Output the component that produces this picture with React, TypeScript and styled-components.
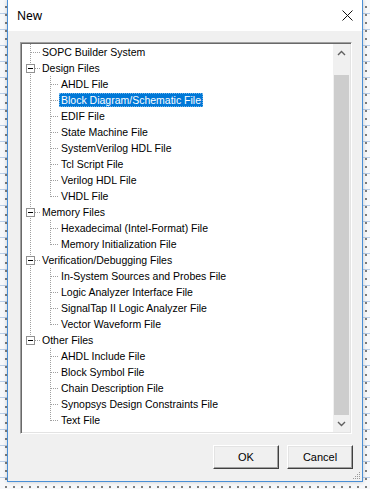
import React from "react";
import styled, { createGlobalStyle } from "styled-components";

const GlobalStyle = createGlobalStyle`
  html, body {
    margin: 0;
    padding: 0;
  }
  body {
    font-family: "Liberation Sans", Arial, sans-serif;
    background: #f7f8fa;
  }
`;

const LINE = "#a0a0a0";

const Page = styled.div`
  box-sizing: border-box;
  width: 370px;
  height: 489px;
  padding: 0 7px 7px 7px;
  background-color: #f7f8fa;
  background-image:
    radial-gradient(circle, #3a3a3a 0.6px, transparent 0.9px),
    repeating-linear-gradient(180deg, transparent 0 13px, #b9cde6 13px 14px, transparent 14px 16px);
  background-size: 8px 8px, 100% 16px;
  background-position: 2px 3px, 0 0;
`;

const Window = styled.div`
  position: relative;
  box-sizing: border-box;
  height: 482px;
  display: flex;
  flex-direction: column;
  background: #f0f0f0;
  border: 1px solid #4a8fd6;
  border-top: none;
  box-shadow: 0 0 4px rgba(0, 0, 0, 0.2);
`;

const TitleBar = styled.div`
  height: 31px;
  flex: none;
  display: flex;
  align-items: center;
  justify-content: space-between;
  padding: 0 9px 0 9px;
  background: #ffffff;
`;

const Title = styled.span`
  font-family: "Noto Sans", "Open Sans", sans-serif;
  font-size: 12px;
  color: #000;
  line-height: 16px;
`;

const CloseIcon = () => (
  <svg width="11" height="11" viewBox="0 0 11 11">
    <path d="M0.5 0.5 L10.5 10.5 M10.5 0.5 L0.5 10.5" stroke="#111" strokeWidth="1" />
  </svg>
);

const Body = styled.div`
  flex: 1;
  display: flex;
  flex-direction: column;
  padding: 11px 10px 12px 12px;
`;

const TreeBox = styled.div`
  box-sizing: border-box;
  height: 392px;
  flex: none;
  display: flex;
  padding: 1px;
  background: #fff;
  border: 1px solid;
  border-color: #a0a0a0 #ffffff #ffffff #a0a0a0;
  box-shadow: inset 1px 1px 0 #696969, inset -1px -1px 0 #e3e3e3;
`;

const TreeList = styled.div`
  flex: 1;
  overflow: hidden;
  background: #fff;
`;

const Row = styled.div`
  height: 16px;
  display: flex;
  align-items: center;
`;

const Label = styled.span<{ $selected?: boolean }>`
  height: 14px;
  line-height: 14px;
  padding: 0 2px;
  font-size: 10.5px;
  white-space: nowrap;
  color: ${(p) => (p.$selected ? "#fff" : "#000")};
  background: ${(p) => (p.$selected ? "#0078d7" : "transparent")};
  outline: ${(p) => (p.$selected ? "1px dotted rgba(255,255,255,0.45)" : "none")};
  outline-offset: -1px;
`;

const ScrollBar = styled.div`
  width: 17px;
  flex: none;
  display: flex;
  flex-direction: column;
  background: #f0f0f0;
`;

const ArrowButton = styled.div`
  height: 17px;
  flex: none;
  display: flex;
  align-items: center;
  justify-content: center;
`;

const Track = styled.div`
  flex: 1;
  display: flex;
  flex-direction: column;
  padding: 14px 1px 0 1px;
`;

const Thumb = styled.div`
  flex: 1;
  background: #cdcdcd;
`;

const ButtonRow = styled.div`
  display: flex;
  justify-content: flex-end;
  gap: 8px;
  margin-top: 11px;
  margin-right: -1px;
`;

const Button = styled.button`
  box-sizing: border-box;
  width: 66px;
  height: 24px;
  padding: 0;
  background: #f0f0f0;
  font-family: "Liberation Sans", Arial, sans-serif;
  font-size: 11px;
  color: #000;
  border: 1px solid;
  border-color: #ffffff #404040 #404040 #ffffff;
  box-shadow: inset -1px -1px 0 #a0a0a0, inset 1px 1px 0 #e3e3e3;
`;

const Grip = styled.svg`
  position: absolute;
  right: 1px;
  bottom: 1px;
`;

const Chevron = ({ up }: { up?: boolean }) => (
  <svg width="9" height="6" viewBox="0 0 9 6">
    <path
      d={up ? "M1 5 L4.5 1.5 L8 5" : "M1 1 L4.5 4.5 L8 1"}
      fill="none"
      stroke="#606060"
      strokeWidth="1.4"
    />
  </svg>
);

interface Node {
  label: string;
  selected?: boolean;
  children?: Node[];
}

const tree: Node[] = [
  { label: "SOPC Builder System" },
  {
    label: "Design Files",
    children: [
      { label: "AHDL File" },
      { label: "Block Diagram/Schematic File", selected: true },
      { label: "EDIF File" },
      { label: "State Machine File" },
      { label: "SystemVerilog HDL File" },
      { label: "Tcl Script File" },
      { label: "Verilog HDL File" },
      { label: "VHDL File" },
    ],
  },
  {
    label: "Memory Files",
    children: [
      { label: "Hexadecimal (Intel-Format) File" },
      { label: "Memory Initialization File" },
    ],
  },
  {
    label: "Verification/Debugging Files",
    children: [
      { label: "In-System Sources and Probes File" },
      { label: "Logic Analyzer Interface File" },
      { label: "SignalTap II Logic Analyzer File" },
      { label: "Vector Waveform File" },
    ],
  },
  {
    label: "Other Files",
    children: [
      { label: "AHDL Include File" },
      { label: "Block Symbol File" },
      { label: "Chain Description File" },
      { label: "Synopsys Design Constraints File" },
      { label: "Text File" },
    ],
  },
];

const dot = { stroke: LINE, strokeWidth: 1, strokeDasharray: "1 1", shapeRendering: "crispEdges" as const };

const RootGutter = ({ last, expandable }: { last: boolean; expandable: boolean }) => (
  <svg width="18" height="16" style={{ flex: "none" }}>
    <line x1="8.5" y1="0" x2="8.5" y2={last ? 9 : 16} {...dot} />
    <line x1={expandable ? 13 : 9} y1="8.5" x2="18" y2="8.5" {...dot} />
    {expandable && (
      <>
        <rect x="4.5" y="4.5" width="8" height="8" fill="#fff" stroke="#919191" shapeRendering="crispEdges" />
        <line x1="6" y1="8.5" x2="11" y2="8.5" stroke="#000" shapeRendering="crispEdges" />
      </>
    )}
  </svg>
);

const ChildGutter = ({ rootCont, last }: { rootCont: boolean; last: boolean }) => (
  <svg width="37" height="16" style={{ flex: "none" }}>
    {rootCont && <line x1="8.5" y1="0" x2="8.5" y2="16" {...dot} />}
    <line x1="28.5" y1="0" x2="28.5" y2={last ? 9 : 16} {...dot} />
    <line x1="29" y1="8.5" x2="37" y2="8.5" {...dot} />
  </svg>
);

export default function App() {
  return (
    <>
      <GlobalStyle />
      <Page>
        <Window>
          <TitleBar>
            <Title>New</Title>
            <CloseIcon />
          </TitleBar>
          <Body>
            <TreeBox>
              <TreeList>
                {tree.map((node, i) => {
                  const lastRoot = i === tree.length - 1;
                  return (
                    <React.Fragment key={node.label}>
                      <Row>
                        <RootGutter last={lastRoot} expandable={!!node.children} />
                        <Label $selected={node.selected}>{node.label}</Label>
                      </Row>
                      {node.children?.map((child, j) => (
                        <Row key={child.label}>
                          <ChildGutter rootCont={!lastRoot} last={j === node.children!.length - 1} />
                          <Label $selected={child.selected}>{child.label}</Label>
                        </Row>
                      ))}
                    </React.Fragment>
                  );
                })}
              </TreeList>
              <ScrollBar>
                <ArrowButton>
                  <Chevron up />
                </ArrowButton>
                <Track>
                  <Thumb />
                </Track>
                <ArrowButton>
                  <Chevron />
                </ArrowButton>
              </ScrollBar>
            </TreeBox>
            <ButtonRow>
              <Button>OK</Button>
              <Button>Cancel</Button>
            </ButtonRow>
          </Body>
          <Grip width="10" height="10" viewBox="0 0 10 10">
            <g fill="#9a9a9a">
              <rect x="8" y="2" width="1" height="1" />
              <rect x="6" y="4" width="1" height="1" />
              <rect x="8" y="4" width="1" height="1" />
              <rect x="4" y="6" width="1" height="1" />
              <rect x="6" y="6" width="1" height="1" />
              <rect x="8" y="6" width="1" height="1" />
              <rect x="2" y="8" width="1" height="1" />
              <rect x="4" y="8" width="1" height="1" />
              <rect x="6" y="8" width="1" height="1" />
              <rect x="8" y="8" width="1" height="1" />
            </g>
          </Grip>
        </Window>
      </Page>
    </>
  );
}
